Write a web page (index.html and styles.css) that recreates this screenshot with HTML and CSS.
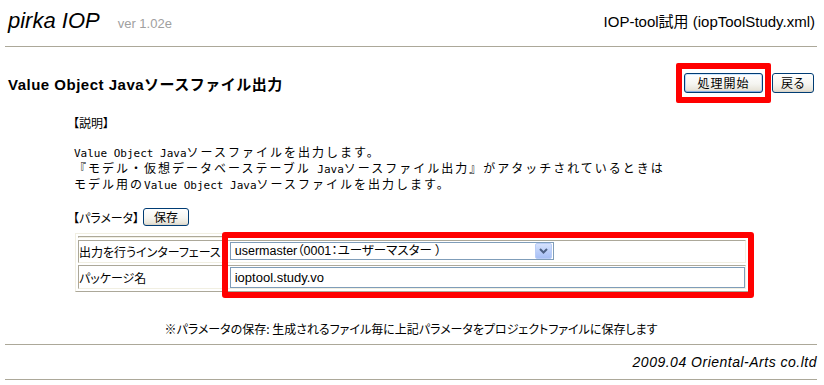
FILE: index.html
```html
<!DOCTYPE html>
<html lang="ja">
<head>
    <meta charset="UTF-8">
    <title>pirka IOP</title>
    <link rel="stylesheet" href="styles.css">
</head>
<body>
<div class="page">

    <div class="header">
        <div class="logo">pirka IOP<span class="ver">ver 1.02e</span></div>
        <div class="project">IOP-tool試用 (iopToolStudy.xml)</div>
    </div>

    <div class="titlebar">
        <h1>Value Object Javaソースファイル出力</h1>
        <div class="actions">
            <span class="mark"><button class="btn btn-run">処理開始</button></span>
            <button class="btn btn-back">戻る</button>
        </div>
    </div>

    <div class="content">
        <p class="caption">【説明】</p>
        <p class="desc">
            <span class="en">Value Object Java</span>ソースファイルを出力します。<br>
            『モデル・仮想データベーステーブル<span class="en"> Java</span>ソースファイル出力』がアタッチされているときは<br>
            モデル用の<span class="en">Value Object Java</span>ソースファイルを出力します。
        </p>

        <div class="param-head">【パラメータ】<button class="btn btn-save">保存</button></div>

        <div class="param-box">
            <table class="param-table">
                <tr class="spacer"><td colspan="2"></td></tr>
                <tr class="row-select">
                    <th>出力を行うインターフェース</th>
                    <td>
                        <div class="select">
                            <span class="select-text">usermaster（0001：ユーザーマスター ）</span>
                            <span class="select-btn">
                                <svg width="9" height="6" viewBox="0 0 9 6"><path d="M1 1 L4.5 4.5 L8 1" fill="none" stroke="#4d6185" stroke-width="2"/></svg>
                            </span>
                        </div>
                    </td>
                </tr>
                <tr class="row-input">
                    <th>パッケージ名</th>
                    <td><input class="text" type="text" value="ioptool.study.vo"></td>
                </tr>
            </table>
            <!-- 注目枠 -->
            <div class="mark-box"></div>
        </div>
    </div>

    <p class="note">※パラメータの保存: 生成されるファイル毎に上記パラメータをプロジェクトファイルに保存します</p>

    <div class="footer">2009.04 Oriental-Arts co.ltd</div>

</div>
</body>
</html>
```

FILE: styles.css
```css
body {
    margin: 0;
    background: #fff;
    color: #000;
    font-family: "Noto Sans CJK JP", sans-serif;
    font-size: 12px;
}

p {
    margin: 0;
}

.page {
    margin: 0 7px 0 5px;
}

/* ヘッダー */
.header {
    display: flex;
    justify-content: space-between;
    align-items: flex-start;
    box-sizing: border-box;
    height: 47px;
    padding: 8px 2px 0 3px;
    border-bottom: 1px solid #aca899;
}

.logo {
    font-family: "Liberation Sans", sans-serif;
    font-style: italic;
    font-size: 22px;
    line-height: 26px;
}

.ver {
    margin-left: 18px;
    font-style: normal;
    font-size: 13px;
    color: #a0a0a0;
}

.project {
    margin-top: 5px;
    font-family: "Liberation Sans", "Noto Sans CJK JP", sans-serif;
    font-size: 15px;
    line-height: 18px;
}

/* タイトル */
.titlebar {
    display: flex;
    justify-content: space-between;
    align-items: center;
    margin-top: 16px;
    padding: 0 3px;
    height: 40px;
}

h1 {
    margin: 0;
    font-family: "Liberation Sans", "Noto Sans CJK JP", sans-serif;
    font-size: 15px;
    font-weight: bold;
    letter-spacing: 0.5px;
}

.actions {
    display: flex;
    align-items: center;
}

.mark {
    display: inline-flex;
    border: 6px solid #ff0000;
    border-radius: 2px;
    padding: 4px 2px 4px 2px;
}

.btn {
    height: 20px;
    padding: 0;
    border: 1px solid #003c74;
    border-radius: 3px;
    background: linear-gradient(#ffffff 0%, #f5f5f1 55%, #e8e5da 88%, #d6d0c5 100%);
    color: #000;
    font-family: "Noto Sans CJK JP", sans-serif;
    font-size: 12px;
    line-height: 18px;
}

.btn-run {
    width: 79px;
    box-shadow: inset 0 1px 0 #cee7ff, inset 0 -1px 0 #89ade4, inset 1px 0 0 #bcd4f6, inset -1px 0 0 #bcd4f6;
    letter-spacing: 1px;
}

.btn-back {
    width: 42px;
    margin-left: 1px;
}

.btn-save {
    width: 46px;
    height: 18px;
    line-height: 16px;
    margin-left: 4px;
}

/* 説明 */
.content {
    padding-left: 68px;
}

.caption {
    margin-top: 12px;
    line-height: 15px;
    font-feature-settings: "palt";
}

.desc {
    margin-top: 14px;
    margin-left: 1px;
    line-height: 15px;
    letter-spacing: 2px;
}

.desc .en {
    font-family: "DejaVu Sans Mono", monospace;
    font-size: 11px;
    line-height: 12px;
    letter-spacing: 0;
}

.param-head {
    display: flex;
    align-items: center;
    margin-top: 16px;
    height: 18px;
    font-feature-settings: "palt";
}

/* パラメータ表 */
.param-box {
    position: relative;
    margin: 7px 0 0 2px;
    width: 673px;
}

.param-table {
    width: 673px;
    border-collapse: separate;
    border-spacing: 2px;
    border: 1px solid;
    border-color: #f1efe2 #aca899 #aca899 #f1efe2;
}

.param-table th,
.param-table td {
    border: 1px solid;
    border-color: #aca899 #f1efe2 #f1efe2 #aca899;
    vertical-align: middle;
}

.param-table th {
    width: 140px;
    padding: 0 2px 0 0;
    text-align: left;
    font-weight: normal;
    font-size: 12px;
    white-space: nowrap;
    font-feature-settings: "palt";
}

.param-table .spacer td {
    height: 0;
    padding: 0;
}

.row-select td {
    padding: 1px 0 2px 3px;
}

.row-input td {
    padding: 1px 0 0 3px;
}

.select {
    display: flex;
    justify-content: space-between;
    align-items: center;
    box-sizing: border-box;
    width: 324px;
    height: 18px;
    border: 1px solid #7f9db9;
    background: #fff;
}

.select-text {
    padding-left: 4px;
    font-family: "Liberation Sans", "Noto Sans CJK JP", sans-serif;
    font-size: 12.5px;
    line-height: 16px;
    font-feature-settings: "palt";
}

.select-btn {
    display: flex;
    align-items: center;
    justify-content: center;
    width: 15px;
    height: 14px;
    margin-right: 1px;
    border: 1px solid #b9cdf7;
    border-radius: 2px;
    background: linear-gradient(#d6e2fd, #b8ccf9 60%, #a7bff6);
}

.text {
    display: block;
    box-sizing: border-box;
    width: 515px;
    height: 21px;
    margin: 0;
    padding: 0 4px;
    border: 1px solid #7f9db9;
    font-family: "Liberation Sans", sans-serif;
    font-size: 13px;
    color: #000;
}

.mark-box {
    position: absolute;
    left: 147px;
    top: -1px;
    width: 532px;
    height: 66px;
    box-sizing: border-box;
    border: 6px solid #ff0000;
    border-radius: 3px;
}

/* フッター */
.note {
    margin-top: 29px;
    line-height: 15px;
    text-align: center;
    font-feature-settings: "palt";
}

.footer {
    margin-top: 8px;
    padding: 9px 0 8px;
    border-top: 1px solid #aca899;
    border-bottom: 1px solid #aca899;
    text-align: right;
    font-family: "Liberation Sans", sans-serif;
    font-style: italic;
    font-size: 14px;
    line-height: 17px;
    letter-spacing: 0.5px;
}
```
